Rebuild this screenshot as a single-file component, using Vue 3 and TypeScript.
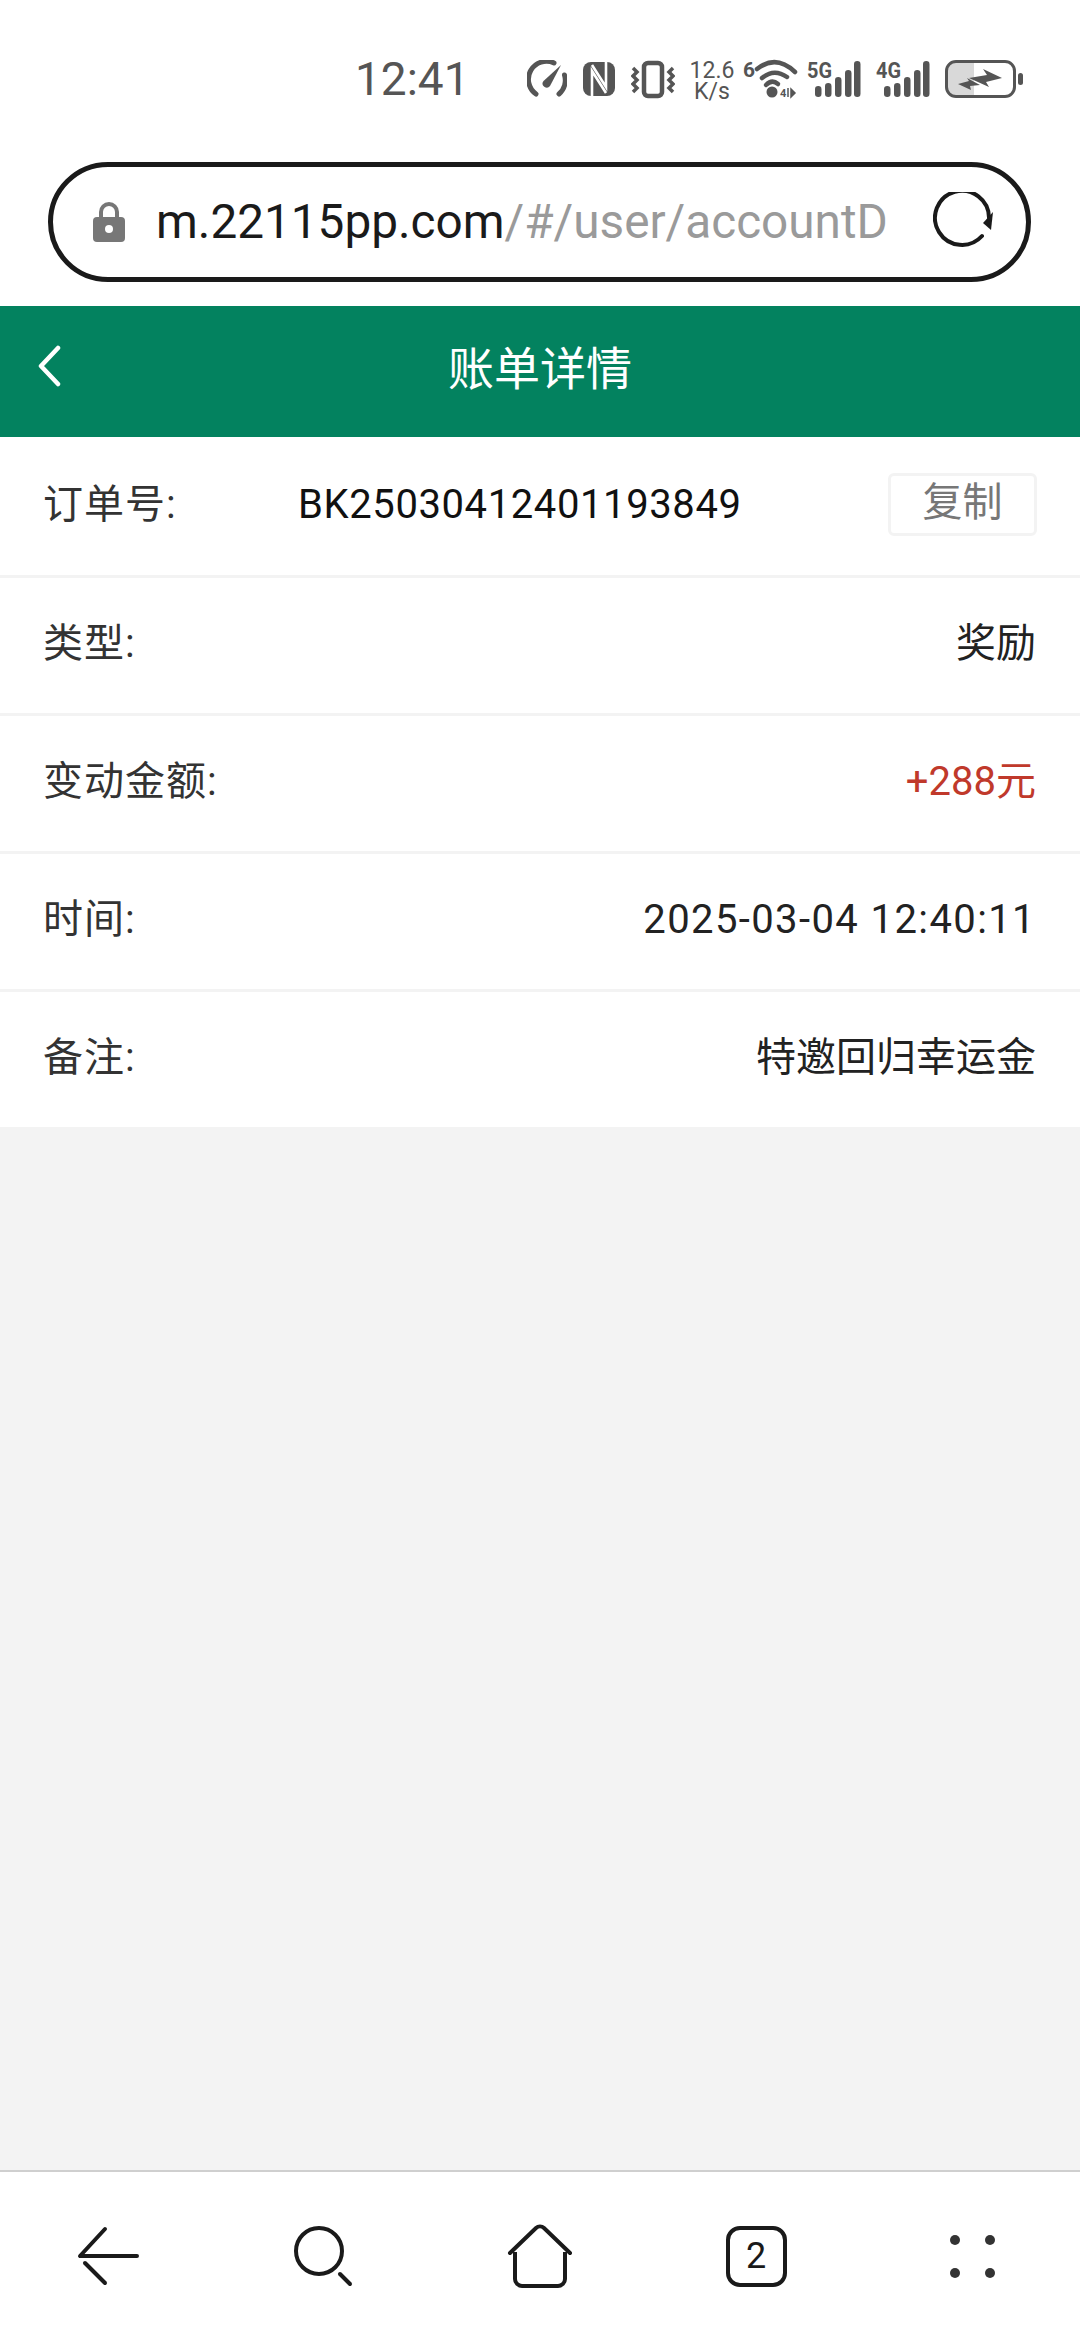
<script setup lang="ts">
interface DetailRow {
  label: string
  value: string
  kind?: string
}

const rows: DetailRow[] = [
  { label: '类型', value: '奖励' },
  { label: '变动金额', value: '+288元', kind: 'money' },
  { label: '时间', value: '2025-03-04 12:40:11', kind: 'date' },
  { label: '备注', value: '特邀回归幸运金' },
]

const signalBars = [
  { x: 8, y: 26, h: 11 },
  { x: 18, y: 23, h: 14 },
  { x: 28, y: 17, h: 20 },
  { x: 38, y: 10, h: 27 },
  { x: 47, y: 1, h: 36 },
]
</script>

<template>
  <div class="page">
    <div class="status-bar">
      <span class="clock">12:41</span>
      <div class="status-icons">
        <svg class="ic-speed" width="40" height="40" viewBox="0 0 40 40">
          <path d="M9 34A18 18 0 0 1 27 3" fill="none" stroke="#555" stroke-width="5" stroke-linecap="round" />
          <path d="M37.5 15A18 18 0 0 1 32 34" fill="none" stroke="#555" stroke-width="5" stroke-linecap="round" />
          <path d="M16.500 21 L34 5 L23 26 A4 4 0 0 1 16.500 21Z" fill="#555" />
        </svg>
        <svg class="ic-nfc" width="32" height="40" viewBox="0 0 32 40">
          <rect x="0" y="2" width="32" height="34" rx="8" fill="#555" />
          <path d="M9 37V11L23 33M23 1V27L9 5" fill="none" stroke="#fff" stroke-width="2.600" />
        </svg>
        <svg class="ic-vibrate" width="44" height="40" viewBox="0 0 44 40">
          <rect x="13" y="3" width="18" height="33" rx="4" fill="none" stroke="#555" stroke-width="4.500" />
          <path d="M2 8L6 12L2 16L6 20L2 24L6 28L2 32" fill="none" stroke="#555" stroke-width="3.500" />
          <path d="M42 8L38 12L42 16L38 20L42 24L38 28L42 32" fill="none" stroke="#555" stroke-width="3.500" />
        </svg>
        <div class="net-speed">
          <span>12.6</span>
          <span>K/s</span>
        </div>
        <svg class="ic-wifi tall" width="55" height="50" viewBox="0 -10 55 50">
          <text x="0" y="17" class="svg-num" font-size="21" textLength="12" lengthAdjust="spacingAndGlyphs">6</text>
          <path d="M14 9Q33 -6 52 12" fill="none" stroke="#555" stroke-width="4.500" stroke-linecap="round" />
          <path d="M19 18Q31 8 44 17" fill="none" stroke="#555" stroke-width="4.500" stroke-linecap="round" />
          <path d="M23 25Q29 19 35 24" fill="none" stroke="#555" stroke-width="4.500" stroke-linecap="round" />
          <circle cx="29" cy="32" r="5.500" fill="#555" />
          <text x="37" y="37" class="svg-num" font-size="11">4</text>
          <path d="M45 28V37M48 29L52 33L48 37Z" fill="#555" stroke="#555" stroke-width="1.500" />
        </svg>
        <svg class="ic-5g tall" width="55" height="50" viewBox="0 -10 55 50">
          <text x="0" y="18" class="svg-num" font-size="22" textLength="25" lengthAdjust="spacingAndGlyphs">5G</text>
          <rect v-for="b in signalBars" :key="b.x" :x="b.x" :y="b.y" width="6.500" :height="b.h" rx="3.200" fill="#555" />
        </svg>
        <svg class="ic-4g tall" width="55" height="50" viewBox="0 -10 55 50">
          <text x="0" y="18" class="svg-num" font-size="22" textLength="25" lengthAdjust="spacingAndGlyphs">4G</text>
          <rect v-for="b in signalBars" :key="b.x" :x="b.x" :y="b.y" width="6.500" :height="b.h" rx="3.200" fill="#555" />
        </svg>
        <svg class="ic-battery" width="78" height="40" viewBox="0 0 78 40">
          <path d="M11 2H29V36H11A9 9 0 0 1 2 27V11A9 9 0 0 1 11 2Z" fill="#d9d9d9" />
          <rect x="1.500" y="1.500" width="68" height="35" rx="9.500" fill="none" stroke="#555" stroke-width="3" />
          <rect x="73" y="13" width="5" height="12" rx="2.500" fill="#555" />
          <path d="M24 18L42 15L38 9L57 18L41 22L44 27Z" fill="#555" />
          <path d="M13 24L24 21L22 18L35 25L25 26L26 30Z" fill="#555" />
        </svg>
      </div>
    </div>

    <div class="url-wrap">
      <div class="url-bar">
        <svg class="lock" width="32" height="40" viewBox="0 0 32 40">
          <path d="M8 18V10A8 8 0 0 1 24 10V18" fill="none" stroke="#777" stroke-width="4" />
          <rect x="0" y="15" width="32" height="25" rx="4" fill="#777" />
          <circle cx="16" cy="27" r="4" fill="#fff" />
        </svg>
        <div class="url-text"><span class="host">m.22115pp.com</span><span class="path">/#/user/accountD</span></div>
        <svg class="reload" width="60" height="60" viewBox="0 0 60 60">
          <path d="M49 44A27 27 0 1 1 56 26" fill="none" stroke="#1a1a1a" stroke-width="4" stroke-linecap="round" />
          <path d="M50 31L60 20L58 38Z" fill="#1a1a1a" />
        </svg>
      </div>
    </div>

    <header class="nav">
      <svg class="back" width="24" height="42" viewBox="0 0 24 42">
        <path d="M21 3L4 21L21 39" fill="none" stroke="#fff" stroke-width="4.500" stroke-linecap="round" stroke-linejoin="round" />
      </svg>
      <h1>账单详情</h1>
    </header>

    <section class="detail">
      <div class="row">
        <span class="label order-label">订单号:</span>
        <span class="order-no">BK25030412401193849</span>
        <button class="copy">复制</button>
      </div>
      <div v-for="row in rows" :key="row.label" class="row">
        <span class="label">{{ row.label }}:</span>
        <span class="value" :class="row.kind">{{ row.value }}</span>
      </div>
    </section>

    <div class="spacer"></div>

    <nav class="toolbar">
      <div class="tool">
        <svg width="64" height="60" viewBox="0 0 64 60">
          <path d="M29 3L4 30H61" fill="none" stroke="#1a1a1a" stroke-width="4" stroke-linecap="round" stroke-linejoin="round" />
          <path d="M9 37L29 57" fill="none" stroke="#1a1a1a" stroke-width="4" stroke-linecap="round" />
        </svg>
      </div>
      <div class="tool">
        <svg width="64" height="64" viewBox="0 0 64 64">
          <circle cx="27" cy="27" r="23" fill="none" stroke="#1a1a1a" stroke-width="4" />
          <path d="M48 50L58 60" fill="none" stroke="#1a1a1a" stroke-width="4" stroke-linecap="round" />
        </svg>
      </div>
      <div class="tool">
        <svg width="66" height="64" viewBox="0 0 66 64">
          <path d="M3 29L29 4A6 6 0 0 1 37 4L63 29" fill="none" stroke="#1a1a1a" stroke-width="4" stroke-linecap="round" />
          <path d="M8 28V55A7 7 0 0 0 15 62H51A7 7 0 0 0 58 55V28" fill="none" stroke="#1a1a1a" stroke-width="4" />
        </svg>
      </div>
      <div class="tool">
        <div class="tab-count">2</div>
      </div>
      <div class="tool">
        <div class="dots"><i></i><i></i><i></i><i></i></div>
      </div>
    </nav>
  </div>
</template>

<style>
html,
body {
  margin: 0;
  background: #fff;
}
</style>

<style scoped>
.page {
  width: 1080px;
  height: 2340px;
  display: flex;
  flex-direction: column;
  background: #f3f3f3;
  font-family: Roboto, "Noto Sans CJK SC", sans-serif;
  color: #222;
  overflow: hidden;
}

.status-bar {
  height: 162px;
  box-sizing: border-box;
  padding: 58px 0 0 355px;
  display: flex;
  align-items: flex-start;
  background: #fff;
}

.clock {
  width: 172px;
  font-size: 46px;
  line-height: 42px;
  color: #555;
}

.status-icons {
  display: flex;
  align-items: flex-start;
  padding-top: 2px;
}

.status-icons svg {
  display: block;
  flex: none;
}

/* these carry a small label over the top edge, the box reaches 10px higher */
.status-icons svg.tall {
  margin-top: -10px;
}

.ic-nfc {
  margin-left: 16px;
}

.ic-vibrate {
  margin-left: 16px;
}

.ic-wifi {
  margin-left: 9px;
}

.ic-5g {
  margin-left: 9px;
}

.ic-4g {
  margin-left: 14px;
}

.ic-battery {
  margin-left: 14px;
}

.svg-num {
  font-family: Roboto, sans-serif;
  font-weight: 700;
  fill: #555;
}

.net-speed {
  width: 44px;
  margin-left: 15px;
  display: flex;
  flex-direction: column;
  align-items: center;
  font-size: 23px;
  line-height: 21px;
  color: #555;
}

.url-wrap {
  height: 144px;
  background: #fff;
}

.url-bar {
  width: 983px;
  height: 120px;
  box-sizing: border-box;
  margin-left: 48px;
  border: 5px solid #1a1a1a;
  border-radius: 60px;
  padding-left: 40px;
  display: flex;
  align-items: center;
}

.lock {
  flex: none;
}

.url-text {
  width: 732px;
  margin-left: 31px;
  font-size: 47.7px;
  white-space: nowrap;
  overflow: hidden;
}

.host {
  color: #1a1a1a;
}

.path {
  color: #9a9a9a;
}

.reload {
  flex: none;
  margin-left: 45px;
}

.nav {
  position: relative;
  height: 131px;
  display: flex;
  align-items: center;
  justify-content: center;
  background: #03825f;
}

.back {
  position: absolute;
  left: 37px;
  top: 39px;
}

.nav h1 {
  margin: 0 0 6px;
  font-size: 46px;
  line-height: 1;
  font-weight: 400;
  color: #fff;
}

.detail {
  background: #fff;
}

.row {
  height: 138px;
  box-sizing: border-box;
  padding: 0 44px 3px 43px;
  display: flex;
  align-items: center;
  border-top: 3px solid #f3f3f3;
  font-size: 40px;
  line-height: 1;
}

.row:first-child {
  border-top: none;
}

.label {
  letter-spacing: 1px;
  color: #333;
}

.order-label {
  width: 255px;
}

.order-no {
  flex: 1;
  letter-spacing: 0.6px;
  color: #111;
}

.value {
  margin-left: auto;
  color: #222;
}

.value.date {
  letter-spacing: 1.4px;
}

.value.money {
  color: #c0392b;
}

.copy {
  width: 149px;
  height: 63px;
  margin-right: -1px;
  padding: 0 0 3px;
  border: 3px solid #f3f3f3;
  border-radius: 6px;
  background: #fff;
  font: inherit;
  color: #777;
}

.spacer {
  flex: 1;
}

.toolbar {
  height: 168px;
  display: grid;
  grid-template-columns: repeat(5, 1fr);
  align-items: center;
  border-top: 2px solid #cfcfcf;
  background: #fff;
}

.tool {
  display: flex;
  justify-content: center;
  align-items: center;
}

.tab-count {
  width: 61px;
  height: 61px;
  box-sizing: border-box;
  border: 4px solid #1a1a1a;
  border-radius: 14px;
  display: flex;
  align-items: center;
  justify-content: center;
  font-size: 36px;
  color: #1a1a1a;
}

.dots {
  display: grid;
  grid-template-columns: 10px 10px;
  grid-auto-rows: 10px;
  column-gap: 25px;
  row-gap: 23px;
}

.dots i {
  border-radius: 50%;
  background: #333;
}
</style>
